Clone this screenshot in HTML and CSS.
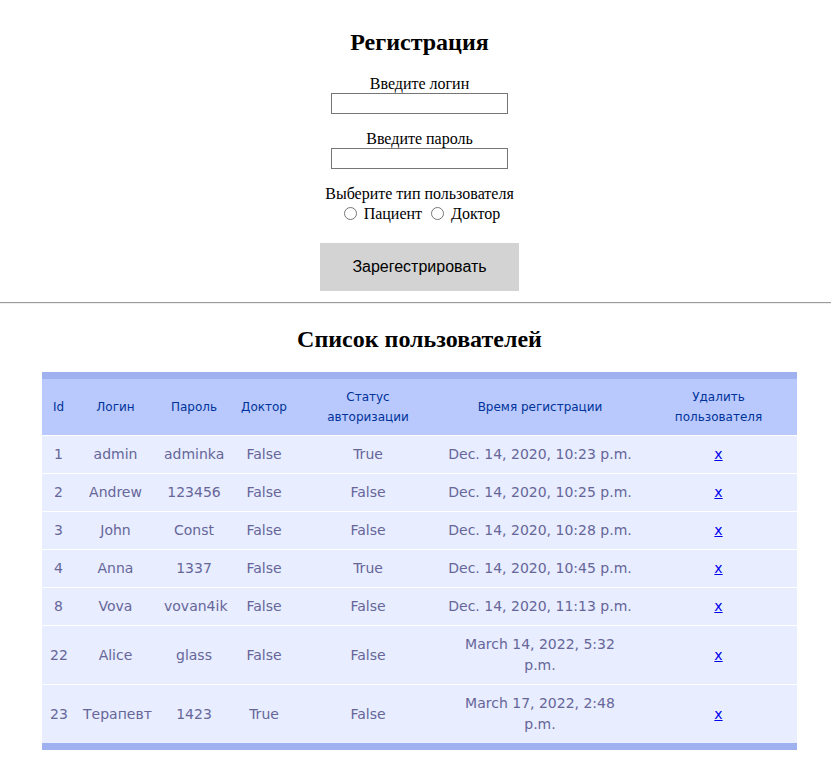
FILE: index.html
```html
<!DOCTYPE html>
<html lang="ru">
<head>
<meta charset="utf-8">
<title>Регистрация</title>
<link rel="stylesheet" href="styles.css">
</head>
<body>
<form class="register">
  <h2 class="title">Регистрация</h2>
  <div class="field first">
    <label for="login">Введите логин</label>
    <input id="login" type="text" class="text-input">
  </div>
  <div class="field">
    <label for="password">Введите пароль</label>
    <input id="password" type="password" class="text-input">
  </div>
  <div class="field usertype">
    <span class="caption">Выберите тип пользователя</span>
    <span class="radios"><input type="radio" name="type" class="radio"> Пациент <input type="radio" name="type" class="radio"> Доктор</span>
  </div>
  <button type="button" class="submit">Зарегестрировать</button>
</form>
<hr class="divider">
<h2 class="title list-title">Список пользователей</h2>
<table class="users">
  <colgroup>
    <col style="width:33px">
    <col style="width:81px">
    <col style="width:76px">
    <col style="width:64px">
    <col style="width:144px">
    <col style="width:200px">
    <col style="width:157px">
  </colgroup>
  <thead>
    <tr>
      <th>Id</th><th>Логин</th><th>Пароль</th><th>Доктор</th><th>Статус авторизации</th><th>Время регистрации</th><th>Удалить пользователя</th>
    </tr>
  </thead>
  <tbody>
    <tr><td>1</td><td>admin</td><td>adminka</td><td>False</td><td>True</td><td>Dec. 14, 2020, 10:23 p.m.</td><td><a href="#">x</a></td></tr>
    <tr><td>2</td><td>Andrew</td><td>123456</td><td>False</td><td>False</td><td>Dec. 14, 2020, 10:25 p.m.</td><td><a href="#">x</a></td></tr>
    <tr><td>3</td><td>John</td><td>Const</td><td>False</td><td>False</td><td>Dec. 14, 2020, 10:28 p.m.</td><td><a href="#">x</a></td></tr>
    <tr><td>4</td><td>Anna</td><td>1337</td><td>False</td><td>True</td><td>Dec. 14, 2020, 10:45 p.m.</td><td><a href="#">x</a></td></tr>
    <tr><td>8</td><td>Vova</td><td>vovan4ik</td><td>False</td><td>False</td><td>Dec. 14, 2020, 11:13 p.m.</td><td><a href="#">x</a></td></tr>
    <tr><td>22</td><td>Alice</td><td>glass</td><td>False</td><td>False</td><td>March 14, 2022, 5:32 p.m.</td><td><a href="#">x</a></td></tr>
    <tr><td>23</td><td>Терапевт</td><td>1423</td><td>True</td><td>False</td><td>March 17, 2022, 2:48 p.m.</td><td><a href="#">x</a></td></tr>
  </tbody>
</table>
</body>
</html>
```
FILE: styles.css
```css
body {
  margin: 0;
  font-family: "Liberation Serif", "Times New Roman", serif;
  font-size: 16px;
  color: #000;
  background: #fff;
}

.register {
  display: flex;
  flex-direction: column;
  align-items: center;
  padding: 28px 0 11px 8px;
  margin: 0;
}

.title {
  margin: 0;
  font-size: 24px;
  line-height: 28px;
  font-weight: bold;
  text-align: center;
}

.field {
  display: flex;
  flex-direction: column;
  align-items: center;
  margin-top: 16px;
  line-height: 18px;
}

.field.first {
  margin-top: 19px;
}

.text-input {
  box-sizing: border-box;
  width: 177px;
  height: 21px;
  margin: 0;
  padding: 1px 2px;
  border: 1px solid #767676;
  background: #fff;
}

.usertype .radios {
  line-height: 19px;
  padding-top: 1px;
}

.radio {
  width: 13px;
  height: 13px;
  margin: 3px 3px 0 5px;
  vertical-align: -1px;
}

.submit {
  margin-top: 20px;
  width: 199px;
  height: 48px;
  border: none;
  background: #d3d3d3;
  font-family: "Liberation Sans", Arial, sans-serif;
  font-size: 16px;
  color: #000;
  padding: 0;
}

.divider {
  margin: 0;
  height: 0;
  border: none;
  border-top: 1px solid #9a9a9a;
  border-bottom: 1px solid #eeeeee;
}

.list-title {
  margin-top: 21px;
  padding-left: 8px;
}

.users {
  margin: 19px 0 0 42px;
  width: 755px;
  table-layout: fixed;
  border-collapse: collapse;
  font-family: "DejaVu Sans", Verdana, sans-serif;
  text-align: center;
}

.users th {
  font-size: 12px;
  font-weight: normal;
  line-height: 20px;
  padding: 8px;
  background: #b9c9fe;
  color: #003399;
  border-top: 7px solid #a0b1f0;
  border-bottom: 1px solid #fff;
}

.users td {
  font-size: 14px;
  line-height: 21px;
  padding: 8px;
  background: #e8edff;
  color: #666699;
  border-bottom: 1px solid #fff;
}

.users tbody tr:last-child td {
  border-bottom: 7px solid #a0b1f0;
}

.users a {
  color: #0000ee;
  text-decoration: underline;
}
```
